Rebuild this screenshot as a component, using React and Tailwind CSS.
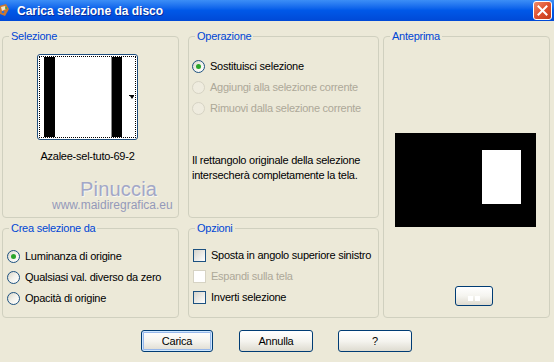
import React from 'react';

function Group({ title, className, children }) {
  return (
    <div className={`relative rounded-[4px] border border-[#d0d0bf] ${className}`}>
      <span className="absolute -top-[7px] left-[6px] bg-[#ece9d8] px-[2px] leading-[13px] text-[#0046d5]">
        {title}
      </span>
      {children}
    </div>
  );
}

function Radio({ label, checked, disabled }) {
  return (
    <div className="flex h-[21px] items-center">
      <span
        className={`flex h-[13px] w-[13px] shrink-0 items-center justify-center rounded-full border ${
          disabled
            ? 'border-[#d6d3c4] bg-[#efecdf]'
            : 'border-[#1c5180] bg-linear-to-br from-[#d8d5c8] via-[#f3f2ec] to-white'
        }`}
      >
        {checked && <span className="h-[5px] w-[5px] rounded-full bg-[#2aa52a]" />}
      </span>
      <span className={`ml-[5px] whitespace-nowrap ${disabled ? 'text-[#aca899]' : 'text-black'}`}>{label}</span>
    </div>
  );
}

function Check({ label, disabled }) {
  return (
    <div className="flex h-[21px] items-center">
      <span
        className={`h-[13px] w-[13px] shrink-0 border ${
          disabled ? 'border-[#d6d3c4] bg-white' : 'border-[#1c5180] bg-linear-to-br from-[#d6d4cb] to-white'
        }`}
      />
      <span className={`ml-[5px] whitespace-nowrap ${disabled ? 'text-[#aca899]' : 'text-black'}`}>{label}</span>
    </div>
  );
}

function XpButton({ label, width, primary, className = '' }) {
  return (
    <button
      className={`flex h-[22px] items-center justify-center rounded-[3px] border border-[#003c74] bg-linear-to-b from-white via-[#f5f4ef] to-[#dedbd0] text-black ${
        primary ? 'shadow-[inset_0_0_0_1px_#cee7ff,inset_0_0_0_2px_#98b8ea]' : ''
      } ${width} ${className}`}
    >
      {label}
    </button>
  );
}

export default function App() {
  return (
    <div className="h-[362px] w-[554px] overflow-hidden bg-[#ece9d8] font-['Liberation_Sans',Arial,sans-serif] text-[11px] tracking-[-0.25px]">
      {/* title bar */}
      <div className="flex h-[21px] items-center bg-linear-to-b from-[#3c8ef6] via-[#0058e8] to-[#0049d6]">
        <svg width="12" height="15" viewBox="0 0 12 15" className="ml-[-2px] shrink-0">
          <path d="M1 3 L8 1 L11 6 L7 13 L2 11 Z" fill="#c9772f" />
          <path d="M3 4 L7 3 L8 6 L4 8 Z" fill="#f5e6c8" />
          <circle cx="5" cy="9" r="1.3" fill="#2f6fd8" />
          <circle cx="8" cy="5" r="1" fill="#3aa63a" />
        </svg>
        <span className="ml-[7px] text-[12px] font-bold tracking-normal text-white [text-shadow:1px_1px_0_#0a2c9a]">
          Carica selezione da disco
        </span>
        <div className="ml-auto mr-[2px] flex h-[19px] w-[19px] items-center justify-center self-start mt-[1px] rounded-[3px] border border-white bg-linear-to-br from-[#f08a6a] via-[#e0502e] to-[#c23a16]">
          <svg width="11" height="11" viewBox="0 0 11 11">
            <path d="M1.5 1.5 L9.5 9.5 M9.5 1.5 L1.5 9.5" stroke="white" strokeWidth="2" strokeLinecap="square" />
          </svg>
        </div>
      </div>

      <div className="flex pl-[2px] pt-[15px]">
        {/* left column */}
        <div className="flex w-[177px] flex-col gap-[10px]">
          <Group title="Selezione" className="h-[182px]">
            <div className="flex flex-col">
              <div className="ml-[34px] mt-[17px] flex w-[101px] flex-col items-center">
                <div className="h-[86px] w-[101px] rounded-[3px] border border-[#1f4d7c] bg-white p-[1px]">
                  <div className="flex h-full border border-dotted border-black pl-[4px]">
                    <div className="w-[11px] bg-black" />
                    <div className="w-[56px] bg-white" />
                    <div className="w-[1px] bg-[#8a8a8a]" />
                    <div className="w-[10px] bg-black" />
                    <div className="flex flex-1 items-center justify-end pr-[1px]">
                      <div className="flex flex-col items-center">
                        <div className="h-[1px] w-[5px] bg-black" />
                        <div className="h-0 w-0 border-l-[2.5px] border-r-[2.5px] border-t-[3px] border-l-transparent border-r-transparent border-t-black" />
                      </div>
                    </div>
                  </div>
                </div>
                <div className="mt-[10px] leading-[13px] text-black">Azalee-sel-tuto-69-2</div>
              </div>
              <div className="ml-[77px] mt-[16px] text-[20px] leading-[20px] tracking-[0.2px] text-[#a2a7c7] [text-shadow:1px_1px_0_#f8f7f1]">
                Pinuccia
              </div>
              <div className="ml-[49px] text-[12px] leading-[12px] tracking-normal text-[#9499ba]">
                www.maidiregrafica.eu
              </div>
            </div>
          </Group>
          <Group title="Crea selezione da" className="h-[90px]">
            <div className="flex flex-col pl-[4px] pt-[17px]">
              <Radio label="Luminanza di origine" checked />
              <Radio label="Qualsiasi val. diverso da zero" />
              <Radio label="Opacità di origine" />
            </div>
          </Group>
        </div>

        {/* middle column */}
        <div className="ml-[9px] flex w-[191px] flex-col gap-[10px]">
          <Group title="Operazione" className="h-[182px]">
            <div className="flex flex-col pl-[3px] pt-[19px]">
              <Radio label="Sostituisci selezione" checked />
              <Radio label="Aggiungi alla selezione corrente" disabled />
              <Radio label="Rimuovi dalla selezione corrente" disabled />
              <p className="mt-[34px] leading-[15px] text-black">
                Il rettangolo originale della selezione
                <br />
                intersecherà completamente la tela.
              </p>
            </div>
          </Group>
          <Group title="Opzioni" className="h-[90px]">
            <div className="flex flex-col pl-[4px] pt-[16px]">
              <Check label="Sposta in angolo superiore sinistro" />
              <Check label="Espandi sulla tela" disabled />
              <Check label="Inverti selezione" />
            </div>
          </Group>
        </div>

        {/* right column */}
        <Group title="Anteprima" className="ml-[4px] h-[282px] w-[167px]">
          <div className="flex flex-col">
            <div className="ml-[11px] mt-[96px] h-[94px] w-[141px] bg-black pl-[87px] pt-[17px]">
              <div className="h-[54px] w-[39px] bg-white" />
            </div>
            <button className="ml-[71px] mt-[59px] flex h-[20px] w-[38px] items-center justify-center gap-[2px] rounded-[3px] border border-[#003c74] bg-linear-to-b from-white via-[#f5f4ef] to-[#dedbd0]">
              <span className="mt-[4px] h-[5px] w-[5px] bg-white" />
              <span className="mt-[4px] h-[5px] w-[5px] bg-white" />
            </button>
          </div>
        </Group>
      </div>

      <div className="flex pl-[141px] pt-[12px]">
        <XpButton label="Carica" width="w-[72px]" primary />
        <XpButton label="Annulla" width="w-[74px]" className="ml-[26px]" />
        <XpButton label="?" width="w-[74px]" className="ml-[25px]" />
      </div>
    </div>
  );
}
